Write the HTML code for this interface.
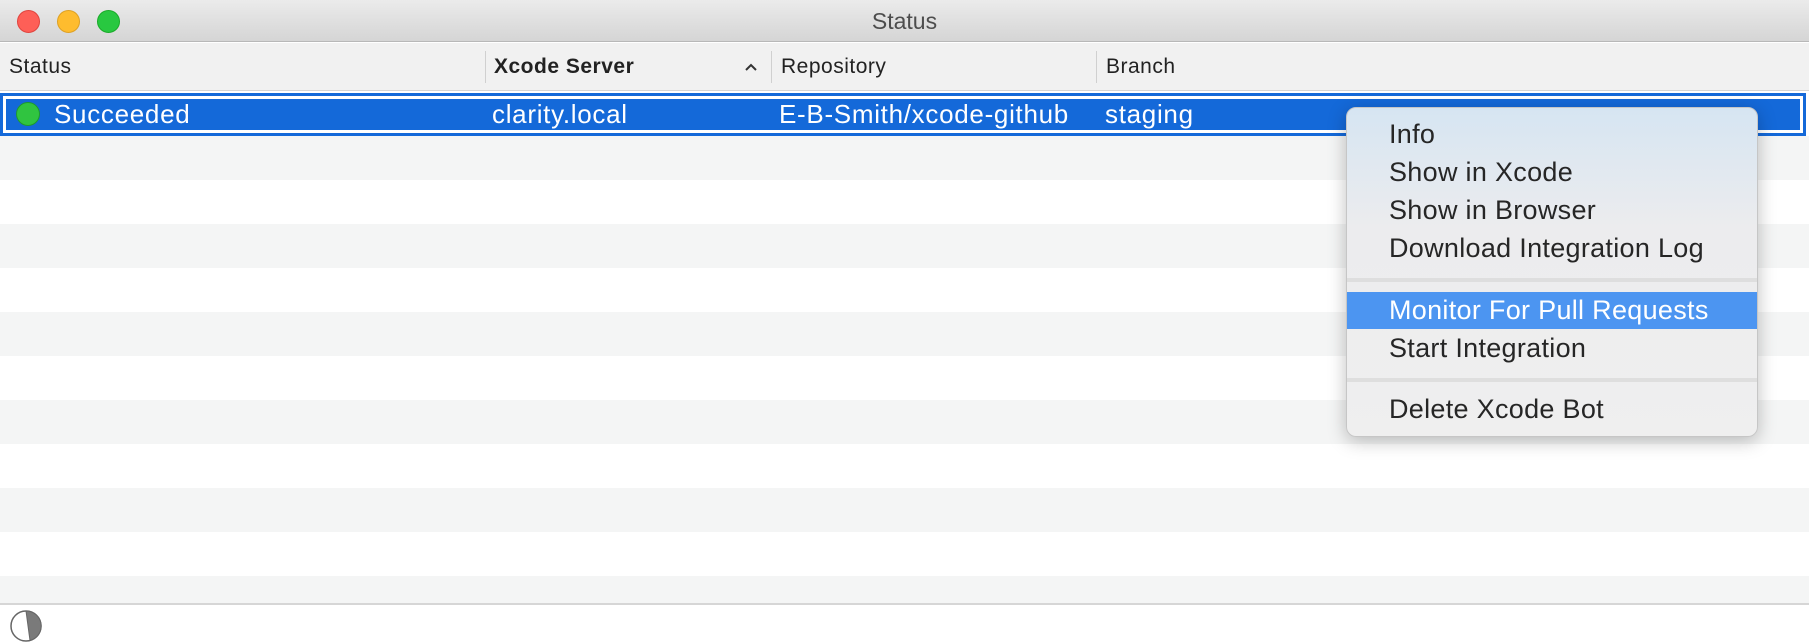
<!DOCTYPE html>
<html><head><meta charset="utf-8"><style>
*{margin:0;padding:0;box-sizing:border-box}
body{width:1809px;height:642px;overflow:hidden;background:#fff;font-family:"Liberation Sans",sans-serif;position:relative}
.tb{position:absolute;left:0;top:0;width:1809px;height:42px;background:linear-gradient(#ebebeb,#d5d5d5);border-bottom:1px solid #b8b8b8}
.tl{position:absolute;top:10px;width:23px;height:23px;border-radius:50%}
.title{position:absolute;top:0;left:0;width:1809px;text-align:center;line-height:42px;font-size:23px;color:#4d4d4d}
.hd{position:absolute;top:43px;left:0;width:1809px;height:48px;background:#f1f1f1;border-bottom:1px solid #d4d4d4}
.hd span{position:absolute;top:0;line-height:48px;font-size:21px;color:#222;letter-spacing:.5px}
.sep{position:absolute;top:8px;width:1px;height:32px;background:#d0d0d0}
.row{position:absolute;left:0;width:1809px;height:44px}
.g{background:#f4f5f5}
.sel{position:absolute;left:0;top:93px;width:1806px;height:43px;border:3px solid #1469d9;background:#fff}
.sel div{position:absolute;left:3px;top:3px;right:3px;bottom:3px;background:#1469d9}
.st{position:absolute;top:93px;line-height:43px;font-size:26px;color:#fff;letter-spacing:.7px}
.ft{position:absolute;top:603px;left:0;width:1809px;height:39px;border-top:2px solid #d6d6d6;background:#fff}
.menu{position:absolute;left:1346px;top:107px;width:412px;height:330px;border-radius:10px;background:linear-gradient(#d6e5f2 0px,#ececee 120px,#efefef 330px);box-shadow:0 4px 18px rgba(0,0,0,.25);border:1px solid #c6c6c6;overflow:hidden}
.mi{position:absolute;left:42px;font-size:27px;color:#262626;letter-spacing:.3px;white-space:nowrap;line-height:56px}
.ms{position:absolute;left:0;width:100%;height:4px;background:#dedede}
</style></head><body>
<div class="tb">
<div class="tl" style="left:17px;background:#fe5f57;border:1px solid #e0443e"></div>
<div class="tl" style="left:57px;background:#febc2e;border:1px solid #dea123"></div>
<div class="tl" style="left:97px;background:#28c840;border:1px solid #1aab29"></div>
<div class="title">Status</div>
</div>
<div class="hd">
<span style="left:9px">Status</span>
<div class="sep" style="left:485px"></div>
<span style="left:494px;font-weight:bold">Xcode Server</span>
<svg style="position:absolute;left:744px;top:19px" width="14" height="10" viewBox="0 0 14 10"><path d="M2 8 L7 3 L12 8" fill="none" stroke="#333" stroke-width="2"/></svg>
<div class="sep" style="left:771px"></div>
<span style="left:781px">Repository</span>
<div class="sep" style="left:1096px"></div>
<span style="left:1106px">Branch</span>
</div>
<div class="row g" style="top:136px"></div>
<div class="row g" style="top:224px"></div>
<div class="row g" style="top:312px"></div>
<div class="row g" style="top:400px"></div>
<div class="row g" style="top:488px"></div>
<div class="row g" style="top:576px;height:27px"></div>
<div class="sel"><div></div></div>
<div style="position:absolute;left:16px;top:102px;width:24px;height:24px;border-radius:50%;background:#30c440;border:1px solid #1d9a2c"></div>
<span class="st" style="left:54px">Succeeded</span>
<span class="st" style="left:492px">clarity.local</span>
<span class="st" style="left:779px">E-B-Smith/xcode-github</span>
<span class="st" style="left:1105px">staging</span>
<div class="ft">
<svg style="position:absolute;left:9px;top:4px" width="34" height="34" viewBox="0 0 34 34"><circle cx="17" cy="17" r="15" fill="#fff" stroke="#666" stroke-width="1.5"/><path d="M17 2 A15 15 0 0 1 21 31.5 Z" fill="#7a7a7a" stroke="#666" stroke-width="1"/></svg>
</div>
<div class="menu">
<div class="mi" style="top:-2px">Info</div>
<div class="mi" style="top:36px">Show in Xcode</div>
<div class="mi" style="top:74px">Show in Browser</div>
<div class="mi" style="top:112px">Download Integration Log</div>
<div class="ms" style="top:170px"></div>
<div style="position:absolute;left:0;top:184px;width:100%;height:37px;background:#4c95f1"></div>
<div class="mi" style="top:174px;color:#fff">Monitor For Pull Requests</div>
<div class="mi" style="top:212px">Start Integration</div>
<div class="ms" style="top:270px"></div>
<div class="mi" style="top:273px">Delete Xcode Bot</div>
</div>
</body></html>
